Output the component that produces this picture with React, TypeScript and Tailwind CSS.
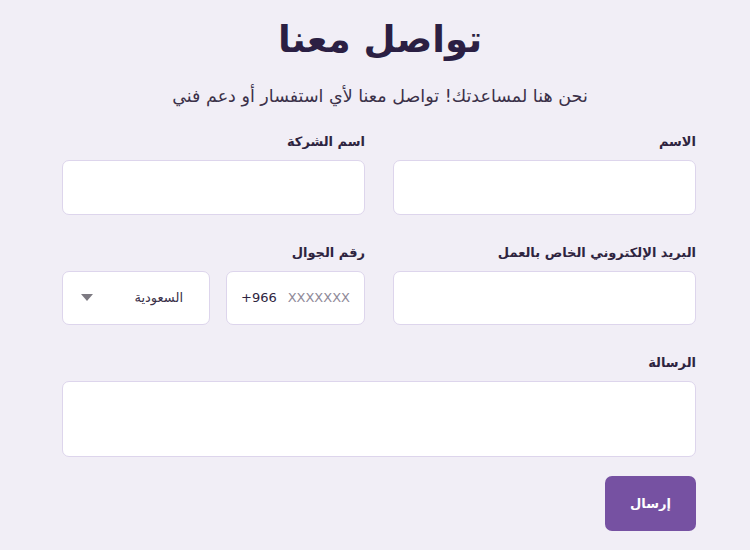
import React from 'react';

const font = { fontFamily: '"DejaVu Sans", "Noto Sans", sans-serif' };

function Field({ label, children }: { label: string; children: React.ReactNode }) {
  return (
    <div className="flex flex-col">
      <label className="mb-[9px] h-[18px] text-[13px] font-bold leading-[18px] text-[#2e2440]">{label}</label>
      {children}
    </div>
  );
}

const box = 'rounded-[7px] border border-[#ddd5ec] bg-white';

export default function App() {
  return (
    <div dir="rtl" className="min-h-[550px] w-[750px] bg-[#f1eef6]" style={font}>
      <div className="pt-[14px] pl-[10px] text-center">
        <h1 className="text-[37px] font-bold leading-[52px] text-[#2b1f43]">تواصل معنا</h1>
        <p className="mt-[18px] text-[17.5px] leading-[24px] text-[#3b3149]">
          نحن هنا لمساعدتك! تواصل معنا لأي استفسار أو دعم فني
        </p>
      </div>

      <form className="mr-[54px] ml-[62px] mt-[25px] flex flex-col" onSubmit={e => e.preventDefault()}>
        <div className="grid grid-cols-2 gap-x-[28px] gap-y-[29px]">
          <Field label="الاسم">
            <input className={`${box} h-[55px] outline-none`} />
          </Field>
          <Field label="اسم الشركة">
            <input className={`${box} h-[55px] outline-none`} />
          </Field>
          <Field label="البريد الإلكتروني الخاص بالعمل">
            <input className={`${box} h-[54px] outline-none`} />
          </Field>
          <Field label="رقم الجوال">
            <div className="flex h-[54px] gap-[16px]">
              <div className={`${box} flex w-[139px] items-center justify-between px-[14px] text-[13px]`} dir="ltr">
                <span dir="ltr" className="text-[#2e2440]">+966</span>
                <span className="text-[#8f8a99]">XXXXXXX</span>
              </div>
              <div className={`${box} flex flex-1 items-center justify-between pr-[26px] pl-[18px] text-[13px] text-[#3b3149]`}>
                <span>السعودية</span>
                <svg width="12" height="8" viewBox="0 0 12 8">
                  <path d="M0 0h12L6 7z" fill="#7d7a82" />
                </svg>
              </div>
            </div>
          </Field>
        </div>

        <div className="mt-[29px]">
          <Field label="الرسالة">
            <textarea className={`${box} h-[76px] resize-none outline-none`} />
          </Field>
        </div>

        <div className="mt-[19px] flex">
          <button
            type="submit"
            className="h-[55px] w-[91px] rounded-[7px] bg-[#7651a2] text-[13px] font-bold text-white"
          >
            إرسال
          </button>
        </div>
      </form>
    </div>
  );
}
